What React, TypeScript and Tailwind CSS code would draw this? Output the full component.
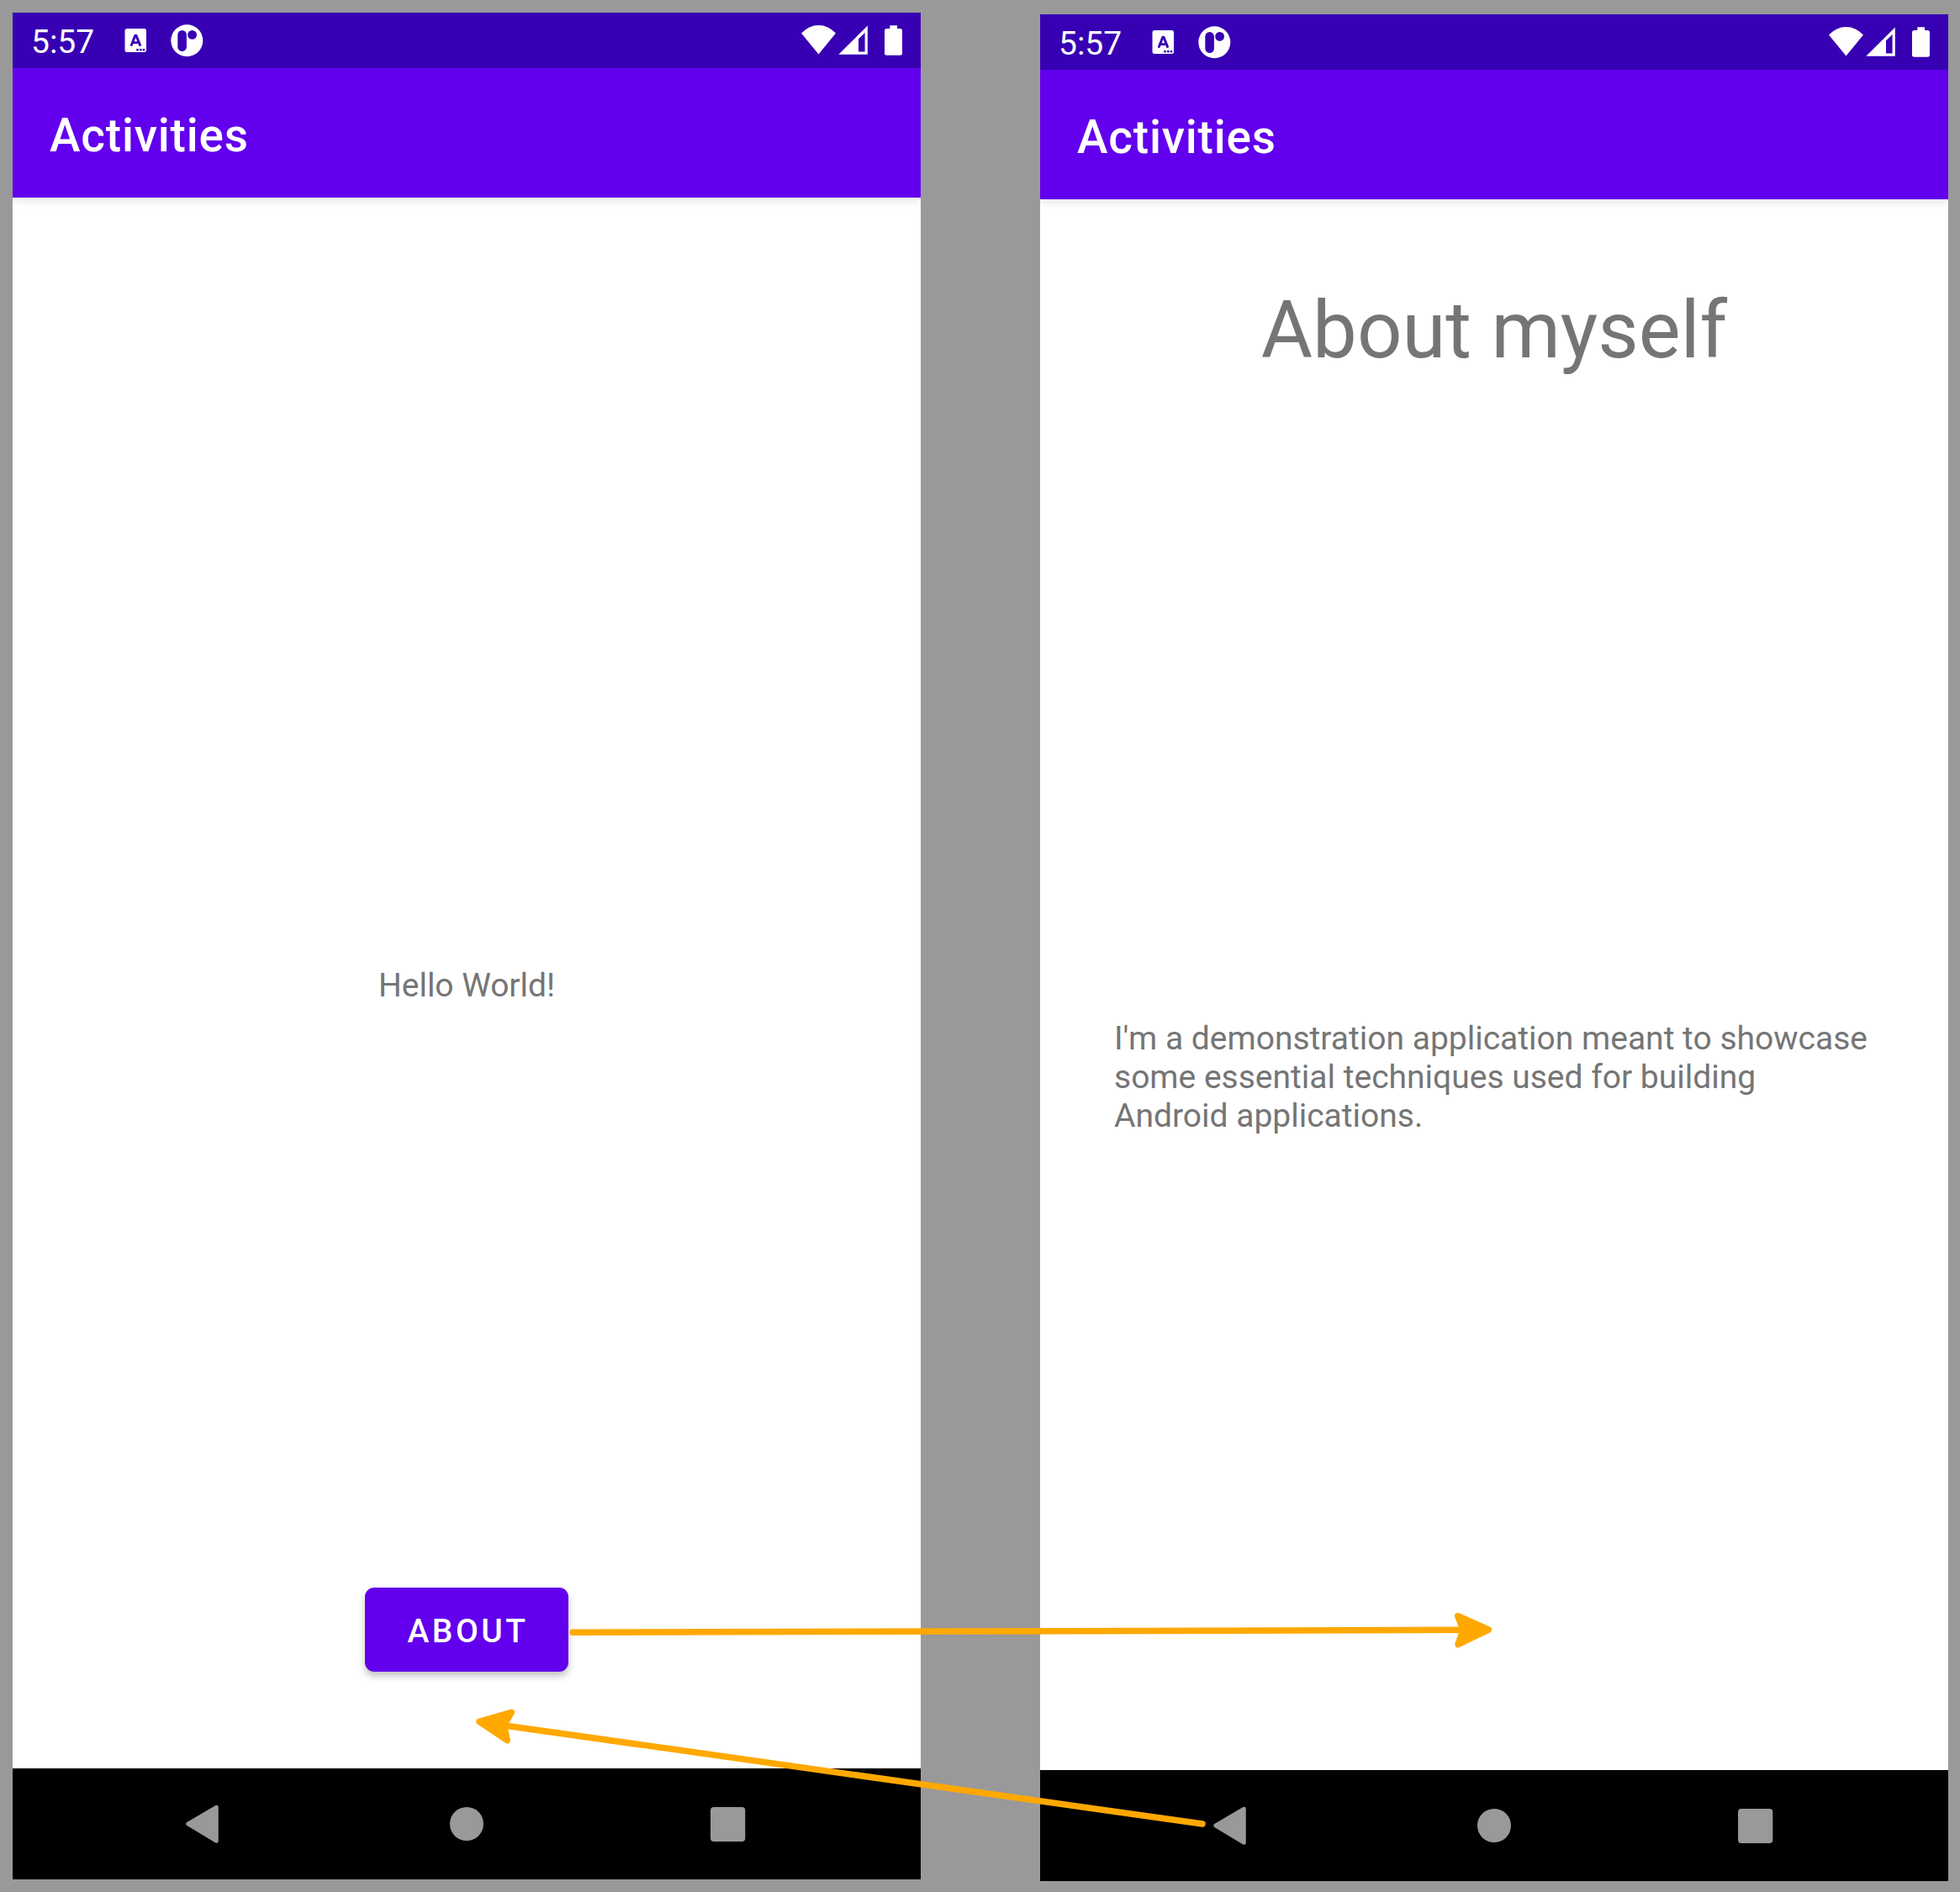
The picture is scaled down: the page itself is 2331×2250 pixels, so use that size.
import type { ReactNode } from "react";

function StatusBar() {
  return (
    <div className="flex h-[66px] shrink-0 bg-[#3700b3] text-white">
      <span className="w-[110px] pl-[22px] pt-[2px] text-[39px] leading-[66px]">5:57</span>
      <svg className="h-[66px] w-[130px]" viewBox="110 0 130 66" fill="none">
        <rect x="133.5" y="19" width="25.5" height="28" rx="2.5" fill="#fff" />
        <path d="M141.4 38.6L145.8 27.2H147L151.5 38.6M143.3 35.6H149.8" stroke="#3700b3" strokeWidth="2.9" strokeLinecap="round" strokeLinejoin="round" />
        <path d="M147.2 43h2.6v2.4h-2.6zM151 43h2.6v2.4H151zM154.8 43h2.4v2.4h-2.4z" fill="#3700b3" />
        <circle cx="207.3" cy="33.3" r="19" fill="#fff" />
        <rect x="196.3" y="21" width="10.6" height="25" rx="5.3" fill="#3700b3" />
        <circle cx="213.6" cy="26.4" r="5.4" fill="#3700b3" />
      </svg>
      <svg className="ml-auto h-[66px] w-[150px]" viewBox="930 0 150 66" fill="#fff">
        <path d="M938 24.5Q947 15 958.5 15T979 24.5L958.5 49.5Z" />
        <path fillRule="evenodd" d="M1016.8 15.5V49.8H982.3ZM1013.6 24L1006 31.2V46.5H1013.6Z" />
        <path d="M1043.3 15.3h8.7v3.7h3.5q2.5 0 2.5 2.5v26.8q0 2.5-2.5 2.5h-16q-2.5 0-2.5-2.5v-26.8q0-2.5 2.5-2.5h3.8z" />
      </svg>
    </div>
  );
}

function NavigationBar() {
  return (
    <div className="h-[132px] shrink-0 bg-black">
      <svg className="h-[132px] w-[1080px]" viewBox="0 0 1080 132" fill="#999">
        <path d="M208.5 66L242.5 46V86.5Z" stroke="#999" strokeWidth="4.5" strokeLinejoin="round" />
        <circle cx="540" cy="66" r="20" />
        <rect x="830" y="46" width="41.3" height="41" rx="4" />
      </svg>
    </div>
  );
}

function Phone({ children }: { children: ReactNode }) {
  return (
    <div className="flex h-[2220px] w-[1080px] shrink-0 flex-col bg-white">
      <StatusBar />
      <div className="z-10 h-[154px] shrink-0 bg-[#6200ee] pl-[44px] pt-[3px] shadow-[0_3px_10px_rgba(0,0,0,0.12)] [clip-path:inset(0_0_-24px_0)]">
        <h1 className="text-[55px] font-medium leading-[154px] tracking-[0.8px] text-white">Activities</h1>
      </div>
      <div className="flex flex-1 flex-col text-[39px] text-[#757575]">{children}</div>
      <NavigationBar />
    </div>
  );
}

function FlowArrows() {
  return (
    <svg className="pointer-events-none absolute left-0 top-0 z-20 h-[2250px] w-[2331px]" viewBox="0 0 2331 2250" fill="#ffa800" stroke="#ffa800" strokeLinecap="round" strokeLinejoin="round">
      <path d="M681 1941.3L1745 1938.3" strokeWidth="7.5" />
      <path d="M1733.7 1921.7L1770.3 1938L1734 1955.5L1740 1938.3Z" strokeWidth="7.5" />
      <path d="M1430 2169L600 2052" strokeWidth="7.5" />
      <path d="M608.3 2036.3L570 2047.3L603.3 2069.7L599.5 2051.6Z" strokeWidth="7.5" />
    </svg>
  );
}

export default function App() {
  return (
    <main className="relative flex h-[2250px] w-[2331px] items-start gap-[142px] overflow-hidden bg-[#999999] pl-[15px] pt-[15px] font-[Roboto,sans-serif]">
      <Phone>
        <p className="pt-[911px] text-center leading-[52px] tracking-[-0.05px]">Hello World!</p>
        <button className="mt-[690px] h-[100px] w-[242px] self-center rounded-[11px] bg-[#6200ee] pl-[3px] pt-[4px] font-medium tracking-[0.0893em] text-white shadow-[0_5px_8px_rgba(0,0,0,0.25)]">
          ABOUT
        </button>
      </Phone>
      <div className="pt-[2px]">
        <Phone>
          <h2 className="pt-[101px] text-center text-[94px] leading-[110px]">About myself</h2>
          <p className="mt-[764px] pl-[88px] leading-[46px]">
            I'm a demonstration application meant to showcase
            <br />
            some essential techniques used for building
            <br />
            Android applications.
          </p>
        </Phone>
      </div>
      <FlowArrows />
    </main>
  );
}
